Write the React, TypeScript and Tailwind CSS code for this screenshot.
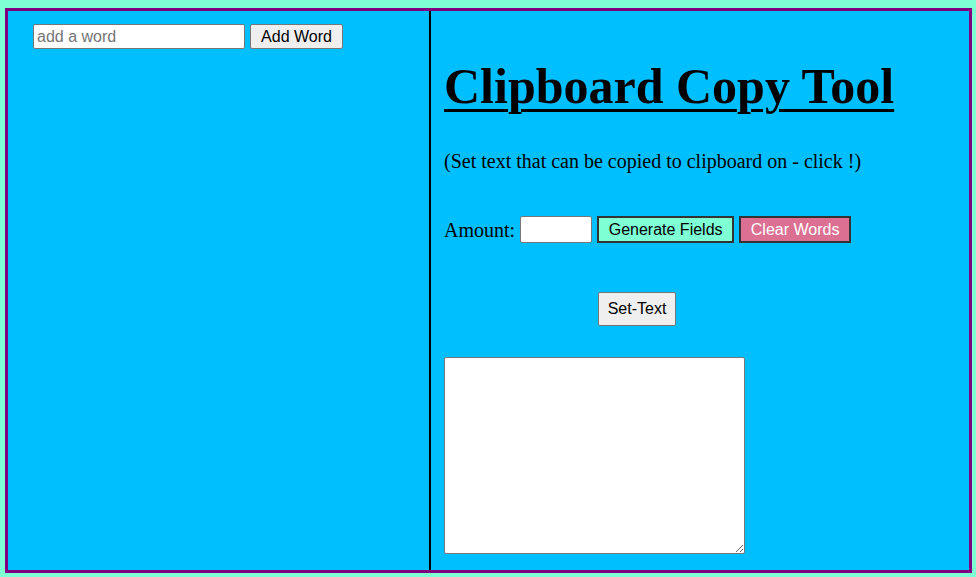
import { useState } from 'react'

export default function App() {
  const [word, setWord] = useState('')
  const [amount, setAmount] = useState('')
  const [text, setText] = useState('')

  return (
    <div className="w-[976px] h-[577px] bg-[#7fffd4] pt-[8px] pl-[5px] pr-[4px] pb-[4px]">
      <div className="flex h-full border-[3px] border-[#800080] bg-[#00bfff]">
        {/* Left: word list */}
        <div className="w-[421px] shrink-0 pt-[13px] pl-[25px]">
          <div className="flex items-center gap-[5px] font-['Liberation_Sans',Arial,sans-serif] text-[16px]">
            <input
              value={word}
              onChange={(e) => setWord(e.target.value)}
              placeholder="add a word"
              className="w-[212px] h-[25px] px-[3px] bg-white border border-[#767676] rounded-[2px] text-black placeholder:text-[#757575] outline-none"
            />
            <button className="h-[25px] w-[93px] bg-[#efefef] border border-[#767676] rounded-[2px] text-black leading-none">
              Add Word
            </button>
          </div>
        </div>

        {/* Right: tool */}
        <div className="flex-1 border-l-2 border-black pl-[13px] flex flex-col items-start font-['Liberation_Serif','Times_New_Roman',serif] text-black">
          <h1 className="mt-[47px] text-[50px] font-bold underline leading-[1.15] decoration-[3px] underline-offset-[6px]">
            Clipboard Copy Tool
          </h1>
          <p className="mt-[34px] text-[20px] leading-[1.15]">
            (Set text that can be copied to clipboard on - click !)
          </p>

          <div className="mt-[42px] flex items-center gap-[5px] text-[20px]">
            <span>Amount:</span>
            <input
              value={amount}
              onChange={(e) => setAmount(e.target.value)}
              className="w-[72px] h-[27px] bg-white border border-[#767676] rounded-[2px] outline-none px-[2px]"
            />
            <button className="h-[27px] w-[137px] bg-[#7fffd4] border-2 border-[#333] text-black font-['Liberation_Sans',Arial,sans-serif] text-[16px] leading-none">
              Generate Fields
            </button>
            <button className="h-[27px] w-[112px] bg-[#db7093] border-2 border-[#333] text-white font-['Liberation_Sans',Arial,sans-serif] text-[16px] leading-none">
              Clear Words
            </button>
          </div>

          <button className="mt-[47px] ml-[154px] w-[78px] h-[34px] bg-[#efefef] border border-[#767676] rounded-[2px] text-black font-['Liberation_Sans',Arial,sans-serif] text-[16px] leading-none">
            Set-Text
          </button>

          <textarea
            value={text}
            onChange={(e) => setText(e.target.value)}
            className="mt-[31px] w-[301px] h-[197px] bg-white border border-[#767676] rounded-[2px] outline-none resize"
          />
        </div>
      </div>
    </div>
  )
}
